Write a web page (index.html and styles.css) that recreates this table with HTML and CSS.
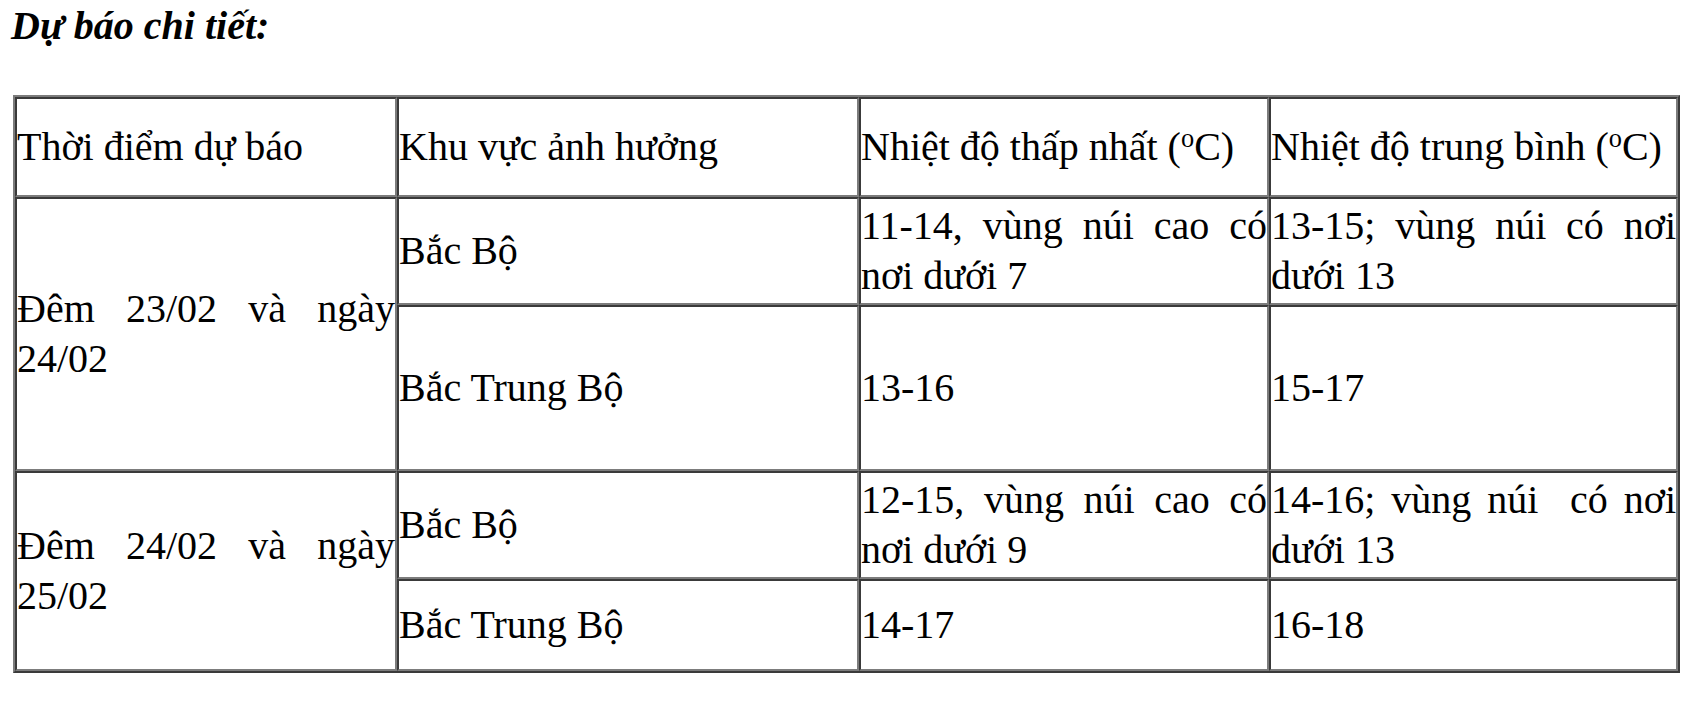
FILE: index.html
```html
<!DOCTYPE html>
<html lang="vi">
<head>
<meta charset="utf-8">
<title>Dự báo chi tiết</title>
<link rel="stylesheet" href="styles.css">
</head>
<body>
<p class="title">Dự báo chi tiết:</p>
<table class="forecast">
  <colgroup>
    <col class="c1"><col class="c2"><col class="c3"><col class="c4">
  </colgroup>
  <tr class="r-head">
    <td>Thời điểm dự báo</td>
    <td>Khu vực ảnh hưởng</td>
    <td>Nhiệt độ thấp nhất (<sup>o</sup>C)</td>
    <td>Nhiệt độ trung bình (<sup>o</sup>C)</td>
  </tr>
  <tr class="r-a">
    <td rowspan="2">Đêm 23/02 và ngày 24/02</td>
    <td>Bắc Bộ</td>
    <td>11-14, vùng núi cao có nơi dưới 7</td>
    <td>13-15; vùng núi có nơi dưới 13</td>
  </tr>
  <tr class="r-b">
    <td>Bắc Trung Bộ</td>
    <td>13-16</td>
    <td>15-17</td>
  </tr>
  <tr class="r-a">
    <td rowspan="2">Đêm 24/02 và ngày 25/02</td>
    <td>Bắc Bộ</td>
    <td>12-15, vùng núi cao có nơi dưới 9</td>
    <td>14-16; vùng núi&nbsp; có nơi dưới 13</td>
  </tr>
  <tr class="r-c">
    <td>Bắc Trung Bộ</td>
    <td>14-17</td>
    <td>16-18</td>
  </tr>
</table>
</body>
</html>
```
FILE: styles.css
```css
html, body {
  margin: 0;
  padding: 0;
  background: #ffffff;
}
body {
  font-family: "Liberation Serif", "Times New Roman", serif;
  color: #000000;
  padding: 0 0 0 13px;
}
.title {
  margin: 0 0 0 -2px;
  padding: 4px 0 0 0;
  font-size: 40px;
  line-height: 44px;
  font-weight: bold;
  font-style: italic;
}
.forecast {
  margin-top: 47px;
  width: 1667px;
  table-layout: fixed;
  border-collapse: separate;
  border-spacing: 0;
  border-width: 2px;
  border-style: solid;
  border-color: #7c7c7c #3a3a3a #3a3a3a #7c7c7c;
  font-size: 40px;
  line-height: 50px;
}
.c1 { width: 382px; }
.c2 { width: 462px; }
.c3 { width: 410px; }
.c4 { width: 409px; }
.forecast td {
  box-sizing: border-box;
  padding: 0;
  border-width: 2px;
  border-style: solid;
  border-color: #3a3a3a #7c7c7c #7c7c7c #3a3a3a;
  vertical-align: middle;
  text-align: justify;
}
.forecast sup {
  font-size: 0.66em;
  line-height: 0;
  vertical-align: 0.5em;
}
.r-head td { height: 100px; }
.r-a td { height: 108px; }
.r-b td { height: 166px; }
.r-c td { height: 92px; }
```
